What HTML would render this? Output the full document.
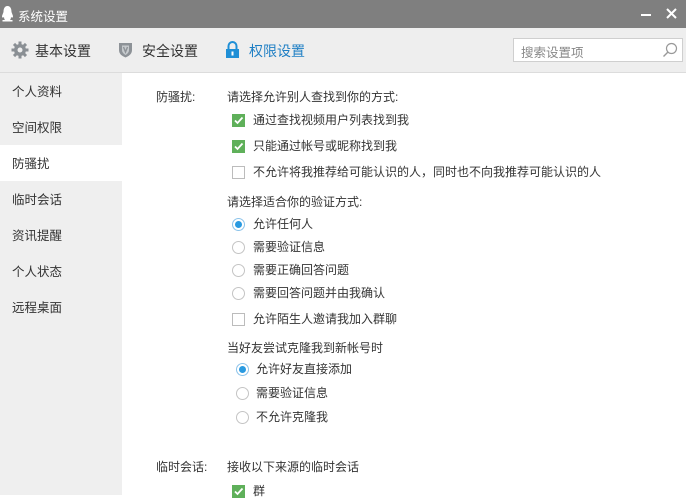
<!DOCTYPE html>
<html><head><meta charset="utf-8"><style>
*{margin:0;padding:0;box-sizing:border-box}
body{width:686px;height:495px;overflow:hidden;font-family:"Liberation Sans","Microsoft YaHei","Noto Sans CJK SC",sans-serif;font-size:12px;color:#333;background:#fff;position:relative}
.a{position:absolute;white-space:nowrap}
.title{left:0;top:0;width:686px;height:28px;background:#7f7f7f;color:#fff}
.tb{left:0;top:28px;width:686px;height:45px;background:#eeeeee;border-bottom:1px solid #dcdcdc}
.side{left:0;top:73px;width:122px;height:422px;background:#efefef}
.si{left:12px;font-size:12.5px;color:#333;line-height:16px}
.cb{width:13px;height:13px;border:1px solid #bcbcbc;background:#fff}
.cb.on{background:#5fb05a;border-color:#5fb05a}
.rd{width:13px;height:13px;border:1px solid #c4c4c4;border-radius:50%;background:#fff}
.rd.on{border-color:#8cc3ea}
.rd.on::after{content:"";position:absolute;left:2px;top:2px;width:7px;height:7px;border-radius:50%;background:#2a9ae0}
.t{line-height:14px;font-size:12px}
</style></head><body>
<div class="a title">
 <svg class="a" style="left:1px;top:5px" width="13" height="17" viewBox="0 0 13 17"><path d="M6.5 1C3.5 1 2.5 4 2.5 7L1 11c0 2 1 2 2 1 0 2 1 3 1 3H1.5v1.5h10V15H9s1-1 1-3c1 1 2 1 2-1l-1.5-4C10.5 4 9.5 1 6.5 1z" fill="#fff"/></svg>
 <span class="a" style="left:18px;top:6px;font-size:12.5px">系统设置</span>
 <div class="a" style="left:641px;top:14px;width:10px;height:2px;background:#fff"></div>
 <svg class="a" style="left:666px;top:8px" width="11" height="11"><path d="M1 1L10 10M10 1L1 10" stroke="#fff" stroke-width="2"/></svg>
</div>
<div class="a tb">
 <svg class="a" style="left:11px;top:13px" width="18" height="18" viewBox="0 0 18 18"><g fill="#8a8f94"><circle cx="9" cy="9" r="6"/><rect x="7.5" y="0.5" width="3" height="17"/><rect x="0.5" y="7.5" width="17" height="3"/><rect x="7.5" y="0.5" width="3" height="17" transform="rotate(45 9 9)"/><rect x="7.5" y="0.5" width="3" height="17" transform="rotate(-45 9 9)"/></g><circle cx="9" cy="9" r="2.5" fill="#eee"/></svg>
 <span class="a" style="left:35px;top:13px;font-size:14px;color:#333">基本设置</span>
 <svg class="a" style="left:118px;top:13px" width="15" height="17" viewBox="0 0 15 17"><path d="M1 2h13v7c0 4-3 6-6.5 7.5C4 15 1 13 1 9z" fill="#8d9297"/><path d="M4 4.5h7v4.5c0 2.5-2 4-3.5 5C6 13 4 11.5 4 9z" fill="#c6cacd"/><path d="M5.5 6l2 5 2-5" stroke="#8d9297" stroke-width="1.4" fill="none"/></svg>
 <span class="a" style="left:142px;top:13px;font-size:14px;color:#333">安全设置</span>
 <svg class="a" style="left:225px;top:13px" width="15" height="18" viewBox="0 0 15 18"><path d="M3.5 8V5a4 4 0 0 1 8 0v3" stroke="#1f8fd6" stroke-width="2" fill="none"/><rect x="1" y="8" width="13" height="9" fill="#1f8fd6"/><rect x="6.5" y="10.5" width="2" height="4" fill="#fff"/></svg>
 <span class="a" style="left:249px;top:13px;font-size:14px;color:#1f7fc4">权限设置</span>
 <div class="a" style="left:513px;top:10px;width:170px;height:24px;background:#fff;border:1px solid #cfcfcf"></div>
 <span class="a" style="left:521px;top:14px;font-size:12.5px;color:#888">搜索设置项</span>
 <svg class="a" style="left:662px;top:14px" width="16" height="16" viewBox="0 0 16 16"><circle cx="9.5" cy="6.5" r="5" stroke="#999" stroke-width="1.2" fill="none"/><path d="M6 10L1.5 14.5" stroke="#999" stroke-width="1.4"/></svg>
</div>
<div class="a side"></div>
<div class="a" style="left:0;top:145px;width:122px;height:36px;background:#fff"></div>
<span class="a si" style="top:84px">个人资料</span>
<span class="a si" style="top:120px">空间权限</span>
<span class="a si" style="top:156px">防骚扰</span>
<span class="a si" style="top:192px">临时会话</span>
<span class="a si" style="top:228px">资讯提醒</span>
<span class="a si" style="top:264px">个人状态</span>
<span class="a si" style="top:300px">远程桌面</span>

<span class="a t" style="left:156px;top:90px">防骚扰:</span>
<span class="a t" style="left:227px;top:90px">请选择允许别人查找到你的方式:</span>
<div class="a cb on" style="left:232px;top:114px"><svg width="11" height="11" style="position:absolute;left:0;top:0"><path d="M2 5.5l2.5 2.5 5-5.5" stroke="#fff" stroke-width="1.8" fill="none"/></svg></div>
<span class="a t" style="left:253px;top:113px">通过查找视频用户列表找到我</span>
<div class="a cb on" style="left:232px;top:140px"><svg width="11" height="11" style="position:absolute;left:0;top:0"><path d="M2 5.5l2.5 2.5 5-5.5" stroke="#fff" stroke-width="1.8" fill="none"/></svg></div>
<span class="a t" style="left:253px;top:139px">只能通过帐号或昵称找到我</span>
<div class="a cb" style="left:232px;top:166px"></div>
<span class="a t" style="left:253px;top:165px">不允许将我推荐给可能认识的人，同时也不向我推荐可能认识的人</span>

<span class="a t" style="left:227px;top:195px">请选择适合你的验证方式:</span>
<div class="a rd on" style="left:232px;top:218px"></div><span class="a t" style="left:253px;top:217px">允许任何人</span>
<div class="a rd" style="left:232px;top:241px"></div><span class="a t" style="left:253px;top:240px">需要验证信息</span>
<div class="a rd" style="left:232px;top:264px"></div><span class="a t" style="left:253px;top:263px">需要正确回答问题</span>
<div class="a rd" style="left:232px;top:287px"></div><span class="a t" style="left:253px;top:286px">需要回答问题并由我确认</span>
<div class="a cb" style="left:232px;top:313px"></div><span class="a t" style="left:253px;top:312px">允许陌生人邀请我加入群聊</span>

<span class="a t" style="left:227px;top:341px">当好友尝试克隆我到新帐号时</span>
<div class="a rd on" style="left:236px;top:363px"></div><span class="a t" style="left:256px;top:362px">允许好友直接添加</span>
<div class="a rd" style="left:236px;top:387px"></div><span class="a t" style="left:256px;top:386px">需要验证信息</span>
<div class="a rd" style="left:236px;top:411px"></div><span class="a t" style="left:256px;top:410px">不允许克隆我</span>

<span class="a t" style="left:156px;top:460px">临时会话:</span>
<span class="a t" style="left:227px;top:460px">接收以下来源的临时会话</span>
<div class="a cb on" style="left:232px;top:485px"><svg width="11" height="11" style="position:absolute;left:0;top:0"><path d="M2 5.5l2.5 2.5 5-5.5" stroke="#fff" stroke-width="1.8" fill="none"/></svg></div>
<span class="a t" style="left:253px;top:484px">群</span>
</body></html>
